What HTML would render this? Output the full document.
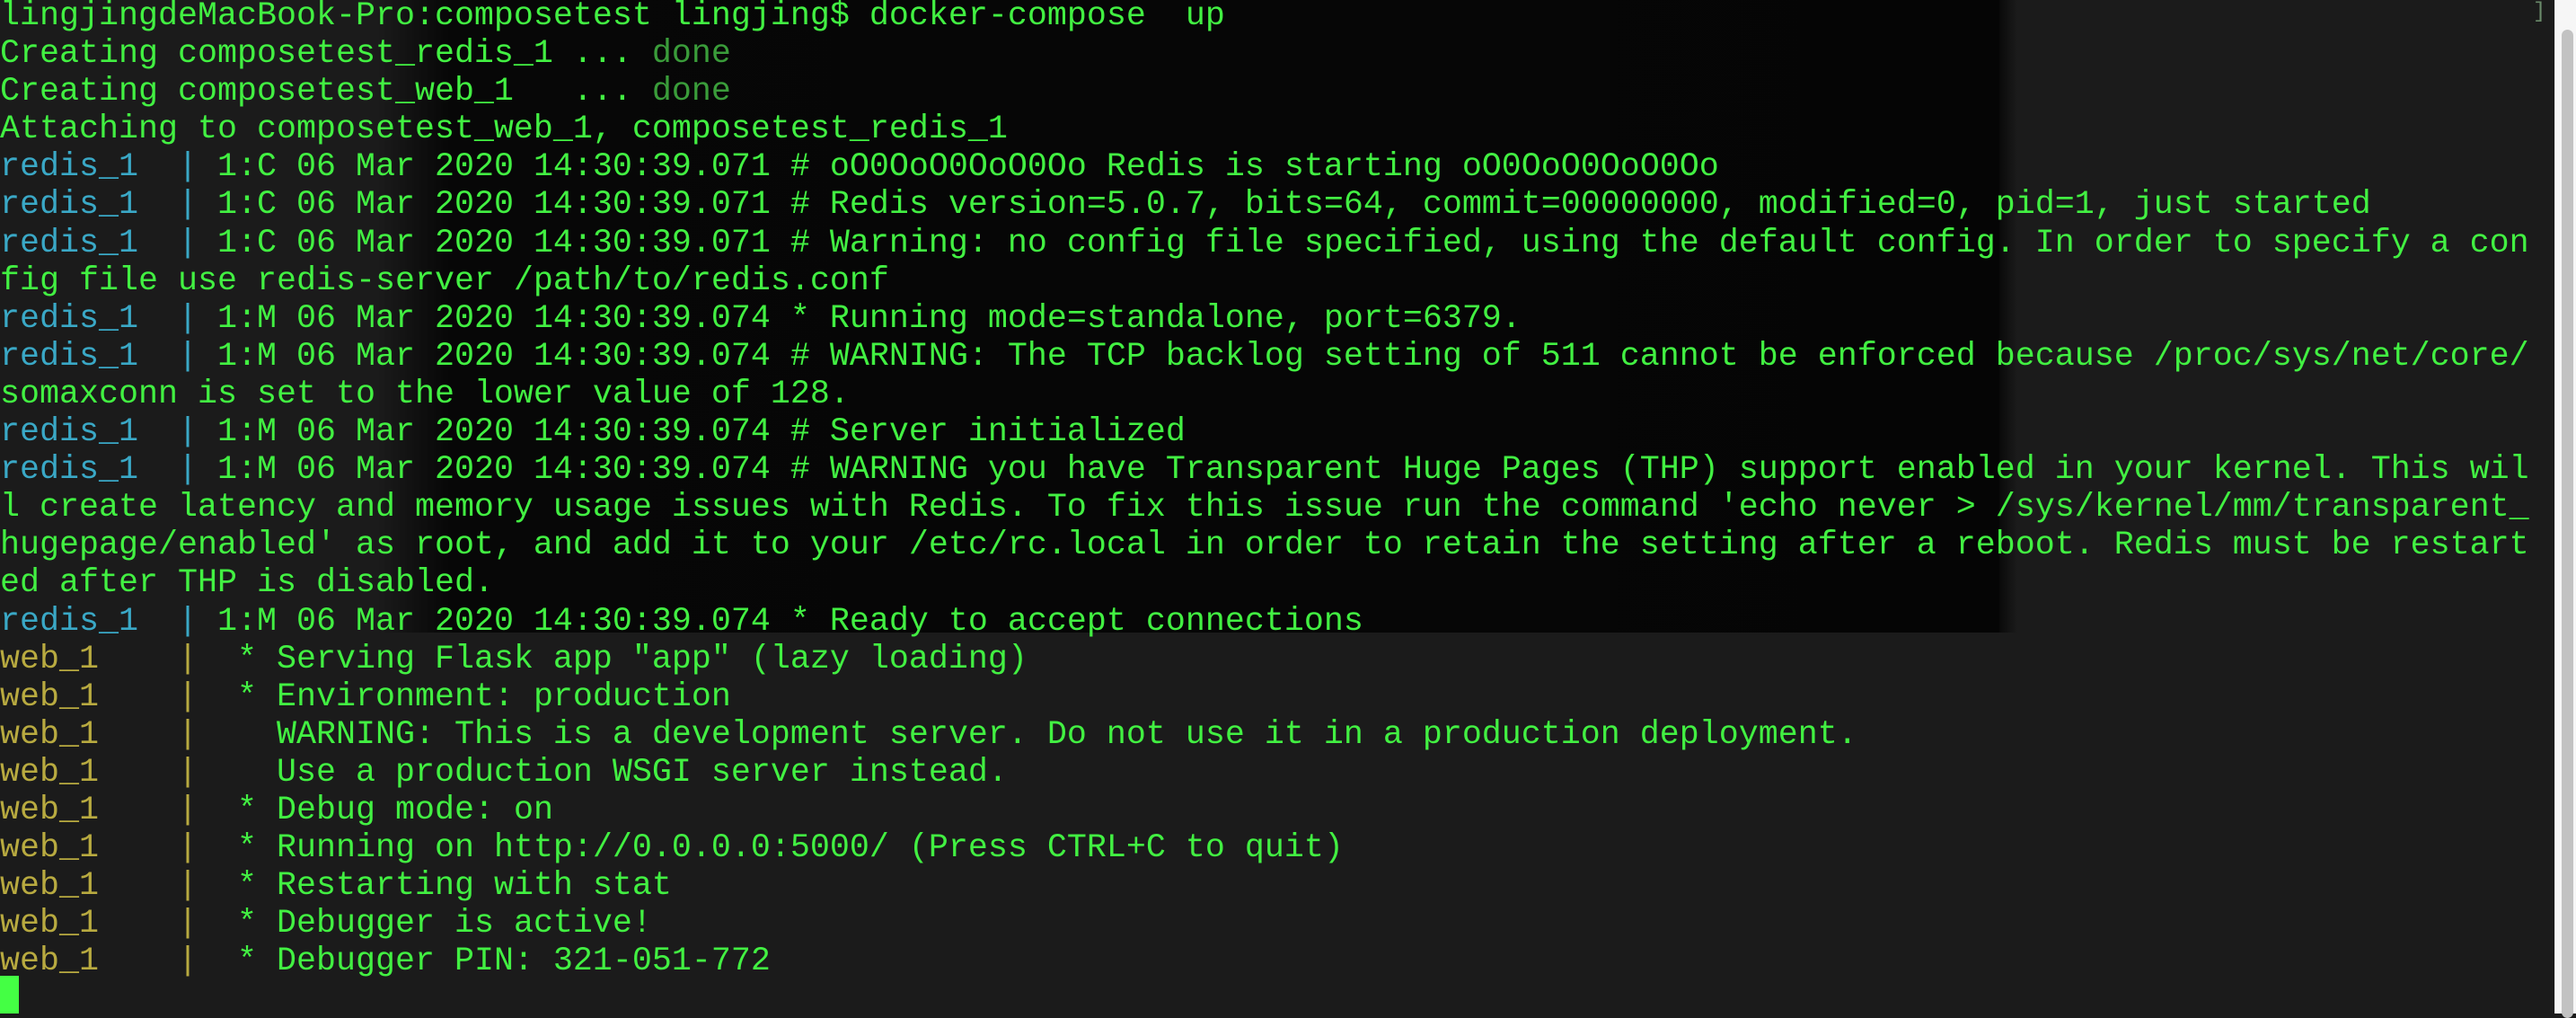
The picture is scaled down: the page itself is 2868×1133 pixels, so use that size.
<!DOCTYPE html>
<html><head><meta charset="utf-8"><style>
html,body{margin:0;padding:0;width:2868px;height:1128px;overflow:hidden;background:#1b1b1b;}
#ov{position:absolute;left:420px;top:0;width:1806px;height:704px;background:linear-gradient(90deg,rgba(0,0,0,0) 0px,#070707 80px,#050505 100%);}
#ov2{position:absolute;left:2226px;top:0;width:600px;height:704px;background:linear-gradient(90deg,#0a0a0a,#1b1b1b 20px);}
pre{position:absolute;left:0;top:-3px;margin:0;font-family:"Liberation Mono",monospace;font-size:36.67px;line-height:42.1px;color:#42f042;white-space:pre;}
.c{color:#3aa8c6}.y{color:#b8aa40}.d{color:#3a9c3a}
#sb{position:absolute;left:2844px;top:0;width:24px;height:1128px;background:#f6f6f6;border-left:1px solid #e2e2e2;}
#th{position:absolute;left:2852px;top:33px;width:13px;height:1100px;background:#c2c2c2;border-radius:7px;}
#cur{position:absolute;left:0;top:1086px;width:21px;height:42px;background:#44ff44;}
#br{position:absolute;left:2820px;top:0;color:#6a8a6a;font-family:"Liberation Mono",monospace;font-size:24px;}
</style></head><body>
<div id="ov"></div><div id="ov2"></div>
<pre>lingjingdeMacBook-Pro:composetest lingjing$ docker-compose  up
Creating composetest_redis_1 ... <span class="d">done</span>
Creating composetest_web_1   ... <span class="d">done</span>
Attaching to composetest_web_1, composetest_redis_1
<span class="c">redis_1  |</span> 1:C 06 Mar 2020 14:30:39.071 # oO0OoO0OoO0Oo Redis is starting oO0OoO0OoO0Oo
<span class="c">redis_1  |</span> 1:C 06 Mar 2020 14:30:39.071 # Redis version=5.0.7, bits=64, commit=00000000, modified=0, pid=1, just started
<span class="c">redis_1  |</span> 1:C 06 Mar 2020 14:30:39.071 # Warning: no config file specified, using the default config. In order to specify a con
fig file use redis-server /path/to/redis.conf
<span class="c">redis_1  |</span> 1:M 06 Mar 2020 14:30:39.074 * Running mode=standalone, port=6379.
<span class="c">redis_1  |</span> 1:M 06 Mar 2020 14:30:39.074 # WARNING: The TCP backlog setting of 511 cannot be enforced because /proc/sys/net/core/
somaxconn is set to the lower value of 128.
<span class="c">redis_1  |</span> 1:M 06 Mar 2020 14:30:39.074 # Server initialized
<span class="c">redis_1  |</span> 1:M 06 Mar 2020 14:30:39.074 # WARNING you have Transparent Huge Pages (THP) support enabled in your kernel. This wil
l create latency and memory usage issues with Redis. To fix this issue run the command 'echo never &gt; /sys/kernel/mm/transparent_
hugepage/enabled' as root, and add it to your /etc/rc.local in order to retain the setting after a reboot. Redis must be restart
ed after THP is disabled.
<span class="c">redis_1  |</span> 1:M 06 Mar 2020 14:30:39.074 * Ready to accept connections
<span class="y">web_1    |</span>  * Serving Flask app "app" (lazy loading)
<span class="y">web_1    |</span>  * Environment: production
<span class="y">web_1    |</span>    WARNING: This is a development server. Do not use it in a production deployment.
<span class="y">web_1    |</span>    Use a production WSGI server instead.
<span class="y">web_1    |</span>  * Debug mode: on
<span class="y">web_1    |</span>  * Running on http://0.0.0.0:5000/ (Press CTRL+C to quit)
<span class="y">web_1    |</span>  * Restarting with stat
<span class="y">web_1    |</span>  * Debugger is active!
<span class="y">web_1    |</span>  * Debugger PIN: 321-051-772</pre>
<div id="br">]</div>
<div id="cur"></div>
<div id="sb"></div><div id="th"></div>
</body></html>
